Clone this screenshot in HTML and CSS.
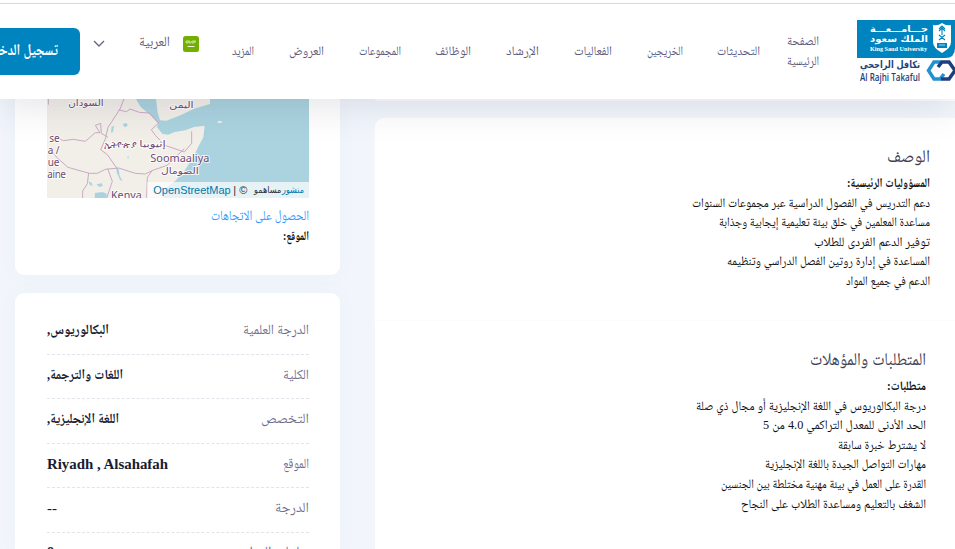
FILE: index.html
```html
<!DOCTYPE html>
<html lang="ar">
<head>
<meta charset="utf-8">
<title>تفاصيل الوظيفة</title>
<link rel="stylesheet" href="styles.css">
</head>
<body>
<header class="topbar">
  <a class="login"><span data-w="73">تسجيل الدخول</span></a>
  <div class="lang">
    <svg class="chevron" width="12" height="8" viewBox="0 0 12 8"><path d="M1 1l5 5 5-5"/></svg>
    <span data-w="31">العربية</span>
    <svg class="flag" width="16" height="16" viewBox="0 0 16 16"><rect width="16" height="16" rx="2.5" fill="#73af00"/><path d="M3 5v2h2V5m1 0v2h2V5m1 0v2h2V5m1 0v2M3 5h4m2 0h4" stroke="#dcebbd" stroke-width=".8" fill="none"/><path d="M4.500 10.500h7" stroke="#eff6df"/></svg>
  </div>
  <nav class="nav">
    <a data-w="22">المزيد</a>
    <a data-w="35">العروض</a>
    <a data-w="42">المجموعات</a>
    <a data-w="36">الوظائف</a>
    <a data-w="33">الإرشاد</a>
    <a data-w="38">الفعاليات</a>
    <a data-w="36">الخريجين</a>
    <a data-w="43">التحديثات</a>
  </nav>
  <a class="home"><span data-w="32">الصفحة</span><span data-w="32">الرئيسية</span></a>
  <div class="brand">
    <svg width="98" height="66" viewBox="0 0 98 66">
      <path d="M0 0h98v28q0 10-10 10H0z" fill="#0084bf"/>
      <g class="ksu">
        <text x="71" y="12" font-size="9" textLength="58" lengthAdjust="spacingAndGlyphs" direction="rtl">جـــامـــعـــة</text>
        <text x="71" y="22" font-size="9" textLength="58" lengthAdjust="spacingAndGlyphs" direction="rtl">الملك سعود</text>
        <text class="serif" x="13" y="31" font-size="7" textLength="57" lengthAdjust="spacingAndGlyphs">King Saud University</text>
      </g>
      <path d="M76 5q5 1 9-2q4 3 9 2v17q0 6-9 11q-9-5-9-11z" fill="#fff"/>
      <path d="M85 6v9M82 9l3-3 3 3M82 11l3-3 3 3M82 15l6 5m0-5l-6 5" fill="none" stroke="#0084bf" stroke-width="1.1"/>
      <path d="M80 23h10v5H80z" fill="#0084bf"/><path d="M82 25h6" stroke="#9fd0e6"/>
      <g class="rajhi">
        <text x="63" y="48" font-size="10" font-weight="bold" textLength="60" lengthAdjust="spacingAndGlyphs" direction="rtl">تكافل الراجحي</text>
        <text class="latin" x="3" y="61" font-size="10" textLength="60" lengthAdjust="spacingAndGlyphs">Al Rajhi Takaful</text>
      </g>
      <g fill="none" stroke-width="3.500">
        <path d="M84 42H77l-5.500 8.500 5.500 8.500h6l4-5" stroke="#2491cf"/>
        <path d="M81 47l4-5h7l6 8.500-6 8.500h-8" stroke="#1e3f7d"/>
      </g>
    </svg>
  </div>
</header>

<div class="content">
  <aside class="side">
    <section class="card map-card">
      <svg class="map" width="262" height="99" viewBox="51 27 786 297" preserveAspectRatio="none">
        <rect x="51" y="27" width="786" height="297" fill="#f2efe9"/>
        <path fill="#aad3df" d="M318 27l14 24 28 23 25 27-4 11 16 19 17 3 20-8 32-5 26-10 32-4-4 35-16 30-13 28-26 40-30 34-28 20-10 30h450V27H540v15l-48 14-37 18-46 18-19-1-7-24-5-40z"/>
        <path fill="#f2efe9" d="M560 96l9-4 10 4-10 4z"/>
        <path fill="#aad3df" d="M278 102l12-3 3 8-9 5zM245 110l7-2-3 18-6 2zM258 232l8 4 3 22 9 15-8-4-9-19zM292 200l5-1-3 9zM175 274l10 4 3 10-8-3zM195 309l22-3 13 5-1 13h-35zM200 283l15-3 4 7-12 4z"/>
        <g fill="none" stroke="#c9abc3" stroke-width="3">
          <path d="M55 27v17M282 27l-12 30M266 60l24 5 10-8 28 10 30 2 28 30-22 20 12 17 29 30 58 20 22-26v-36M463 176l-52 50-45 16-14 20-2 62M366 242l-20 10-30-2-50-16-40 4-24 12-24 0-64-18-32-28-25-30M270 57l-36 55-8 35-14 32 20 15 28 40M70 138l30 14 30-4 36 6 30-26 14 0-14-22 16-6 2 30 20 12M176 249l-4 32-14 22v21M233 236l14 38-17 50"/>
        </g>
        <g class="map-labels">
          <text x="115" y="47" font-size="27" textLength="106" lengthAdjust="spacingAndGlyphs">السودان</text>
          <text x="418" y="53" font-size="27" textLength="73" lengthAdjust="spacingAndGlyphs">اليمن</text>
          <text x="223" y="173" font-size="27" textLength="95" lengthAdjust="spacingAndGlyphs">ኢትዮጵያ</text>
          <text x="328" y="171" font-size="27" textLength="79" lengthAdjust="spacingAndGlyphs">إثيوبيا</text>
          <text x="361" y="217" font-size="32" textLength="177" lengthAdjust="spacingAndGlyphs">Soomaaliya</text>
          <text x="393" y="252" font-size="27" textLength="113" lengthAdjust="spacingAndGlyphs">الصومال</text>
          <text x="243" y="326" font-size="32" textLength="92" lengthAdjust="spacingAndGlyphs">Kenya</text>
          <text x="58" y="156" font-size="30">se</text>
          <text x="53" y="192" font-size="30">a /</text>
          <text x="53" y="228" font-size="30">ue</text>
          <text x="52" y="264" font-size="30" textLength="56">aine</text>
        </g>
        <path d="M352 276h485v48H352z" fill="#fff" fill-opacity=".7"/>
        <g class="credit">
          <text x="370" y="311" textLength="232" lengthAdjust="spacingAndGlyphs" fill="#0078a8">OpenStreetMap</text>
          <text x="610" y="311">|</text><text x="628" y="311">©</text>
          <text x="672" y="308" font-size="29" textLength="82" lengthAdjust="spacingAndGlyphs">مساهمو</text>
          <text x="756" y="308" font-size="29" textLength="66" lengthAdjust="spacingAndGlyphs" fill="#0078a8">منشور</text>
        </g>
      </svg>
      <a class="directions"><span data-w="98">الحصول على الاتجاهات</span></a>
      <p class="place"><b data-w="26">الموقع:</b></p>
    </section>
    <section class="card facts">
      <div class="row"><b data-w="62">البكالوريوس,</b><span data-w="66">الدرجة العلمية</span></div>
      <div class="row"><b data-w="76">اللغات والترجمة,</b><span data-w="26">الكلية</span></div>
      <div class="row"><b data-w="72">اللغة الإنجليزية,</b><span data-w="48">التخصص</span></div>
      <div class="row"><b class="latin-value" dir="ltr" data-w="121">Riyadh , Alsahafah</b><span data-w="26">الموقع</span></div>
      <div class="row"><b class="latin-value dash" data-w="10">--</b><span data-w="34">الدرجة</span></div>
      <div class="row last"><b class="latin-value" data-w="7">8</b><span data-w="64">ساعات العمل</span></div>
    </section>
  </aside>

  <main class="main">
    <div class="previous"></div>
    <section class="panel about">
      <h2><span data-w="43">الوصف</span></h2>
      <p><b data-w="83">المسؤوليات الرئيسية:</b></p>
      <p><span data-w="238">دعم التدريس في الفصول الدراسية عبر مجموعات السنوات</span></p>
      <p><span data-w="211">مساعدة المعلمين في خلق بيئة تعليمية إيجابية وجذابة</span></p>
      <p><span data-w="116">توفير الدعم الفردى للطلاب</span></p>
      <p><span data-w="203">المساعدة في إدارة روتين الفصل الدراسي وتنظيمه</span></p>
      <p><span data-w="84">الدعم في جميع المواد</span></p>
    </section>
    <section class="panel needs">
      <h2><span data-w="116">المتطلبات والمؤهلات</span></h2>
      <p><b data-w="39">متطلبات:</b></p>
      <p><span data-w="230">درجة البكالوريوس في اللغة الإنجليزية أو مجال ذي صلة</span></p>
      <p><span data-w="163">الحد الأدنى للمعدل التراكمي 4.0 من 5</span></p>
      <p><span data-w="88">لا يشترط خبرة سابقة</span></p>
      <p><span data-w="161">مهارات التواصل الجيدة باللغة الإنجليزية</span></p>
      <p><span data-w="205">القدرة على العمل في بيئة مهنية مختلطة بين الجنسين</span></p>
      <p><span data-w="185">الشغف بالتعليم ومساعدة الطلاب على النجاح</span></p>
    </section>
  </main>
</div>
<script src="fit.js"></script>
</body>
</html>
```
FILE: styles.css
```css
* { box-sizing: border-box; }
body {
  margin: 0;
  width: 955px;
  height: 549px;
  overflow: hidden;
  background: #f2f6fc;
  color: #111;
  font-family: "Liberation Serif", "Noto Naskh Arabic", "Amiri", "DejaVu Sans", serif;
  font-size: 13px;
}
h2, p { margin: 0; }
[data-w] { display: inline-block; flex: none; direction: rtl; white-space: nowrap; text-align: left; }
.fit-ink { display: inline-block; transform-origin: 0 50%; }

.topbar {
  position: relative;
  z-index: 2;
  display: flex;
  height: 99px;
  background: #fff;
  box-shadow: 0 5px 40px rgba(40, 45, 70, .14);
  padding-top: 3px;
}
.topbar::before {
  content: "";
  position: absolute;
  inset: 3px 0 auto;
  height: 1px;
  background: #d9d9dc;
}
.login {
  flex: none;
  width: 80px;
  height: 47px;
  margin-top: 25px;
  padding-right: 22px;
  display: flex;
  align-items: center;
  justify-content: flex-end;
  background: #0084bf;
  color: #fff;
  border-radius: 0 6px 6px 0;
  font-size: 16px;
  font-weight: bold;
  overflow: hidden;
}
.lang {
  flex: none;
  display: flex;
  align-items: center;
  height: 20px;
  margin: 30px 0 0 13px;
  color: #5c5b7c;
  font-size: 14px;
}
.chevron { margin-right: 34px; margin-top: 1px; fill: none; stroke: #67668a; stroke-width: 1.4; }
.flag { margin: 1px 0 0 13px; }
.nav { flex: none; display: flex; gap: 34.75px; margin: 38px 0 0 33px; color: #5c5b7c; line-height: 20px; }
.home {
  flex: none;
  display: flex;
  flex-direction: column;
  margin: 28px 0 0 27px;
  color: #5c5b7c;
  line-height: 20px;
}
.brand { flex: none; margin: 17px 0 0 37.75px; }
.brand svg { display: block; }
.ksu { fill: #fff; font-family: "DejaVu Sans", sans-serif; font-weight: bold; }
.ksu .serif { font-family: "Liberation Serif", serif; }
.rajhi { fill: #1e3f7d; font-family: "DejaVu Sans", sans-serif; }
.rajhi .latin { font-family: "Open Sans", sans-serif; font-weight: 600; }

.content { display: flex; height: 450px; overflow: hidden; }
.side { width: 325px; margin-left: 15px; }
.card { background: #fff; box-shadow: 0 0 20px rgba(70, 90, 140, .04); padding: 0 31px 0 32px; }
.map-card { height: 176px; border-radius: 0 0 9px 9px; text-align: right; }
.map { display: block; }
.map-labels {
  font-family: "Noto Sans", "DejaVu Sans", sans-serif;
  fill: #6f4a70;
  paint-order: stroke;
  stroke: #fff;
  stroke-opacity: .75;
  stroke-width: 6px;
}
.credit { font-family: "Liberation Sans", "DejaVu Sans", sans-serif; font-size: 33px; fill: #333; }
.directions { display: block; margin-top: 8px; line-height: 20px; color: #3699ff; font-size: 14px; }
.place { line-height: 20px; }
.facts { height: 256px; margin-top: 18px; padding-top: 17px; border-radius: 9px 9px 0 0; }
.row {
  display: flex;
  justify-content: space-between;
  align-items: center;
  height: 44.5px;
  padding-bottom: 1px;
  border-bottom: 1px dashed #e2e3eb;
  color: #716f8d;
  font-size: 14px;
}
.row b { color: #181c32; }
.row .latin-value { font-size: 14px; }
.row .dash { font-weight: normal; }
.last { height: 43px; }

.main { flex: 1; margin-left: 35px; }
.previous { height: 2px; background: #fff; border-radius: 0 0 0 5px; }
.panel { background: #fff; text-align: right; line-height: 19.6px; }
.panel h2 { color: #3f4254; font-size: 18px; font-weight: normal; line-height: 28px; }
.about { height: 202px; margin-top: 17px; padding: 24px 25px 0 0; border-radius: 9px 0 0; box-shadow: 0 1px 6px #f7f7fa; }
.about h2 { margin-bottom: 3px; }
.needs { height: 229px; padding: 24px 29px 0 0; border-top: 1px solid #fcfcfd; }
.needs h2 { margin-bottom: 3px; }
.panel p { height: 19.6px; }
```
FILE: fit.js
```js
document.querySelectorAll('[data-w]').forEach(function (el) {
  var ink = document.createElement('span');
  ink.className = 'fit-ink';
  ink.textContent = el.textContent;
  el.textContent = '';
  el.appendChild(ink);
  el.style.direction = 'ltr';
  ink.style.direction = el.dir === 'ltr' ? 'ltr' : 'rtl';
  var width = ink.getBoundingClientRect().width;
  el.style.width = el.dataset.w + 'px';
  ink.style.transform = 'scaleX(' + el.dataset.w / width + ')';
});
```
